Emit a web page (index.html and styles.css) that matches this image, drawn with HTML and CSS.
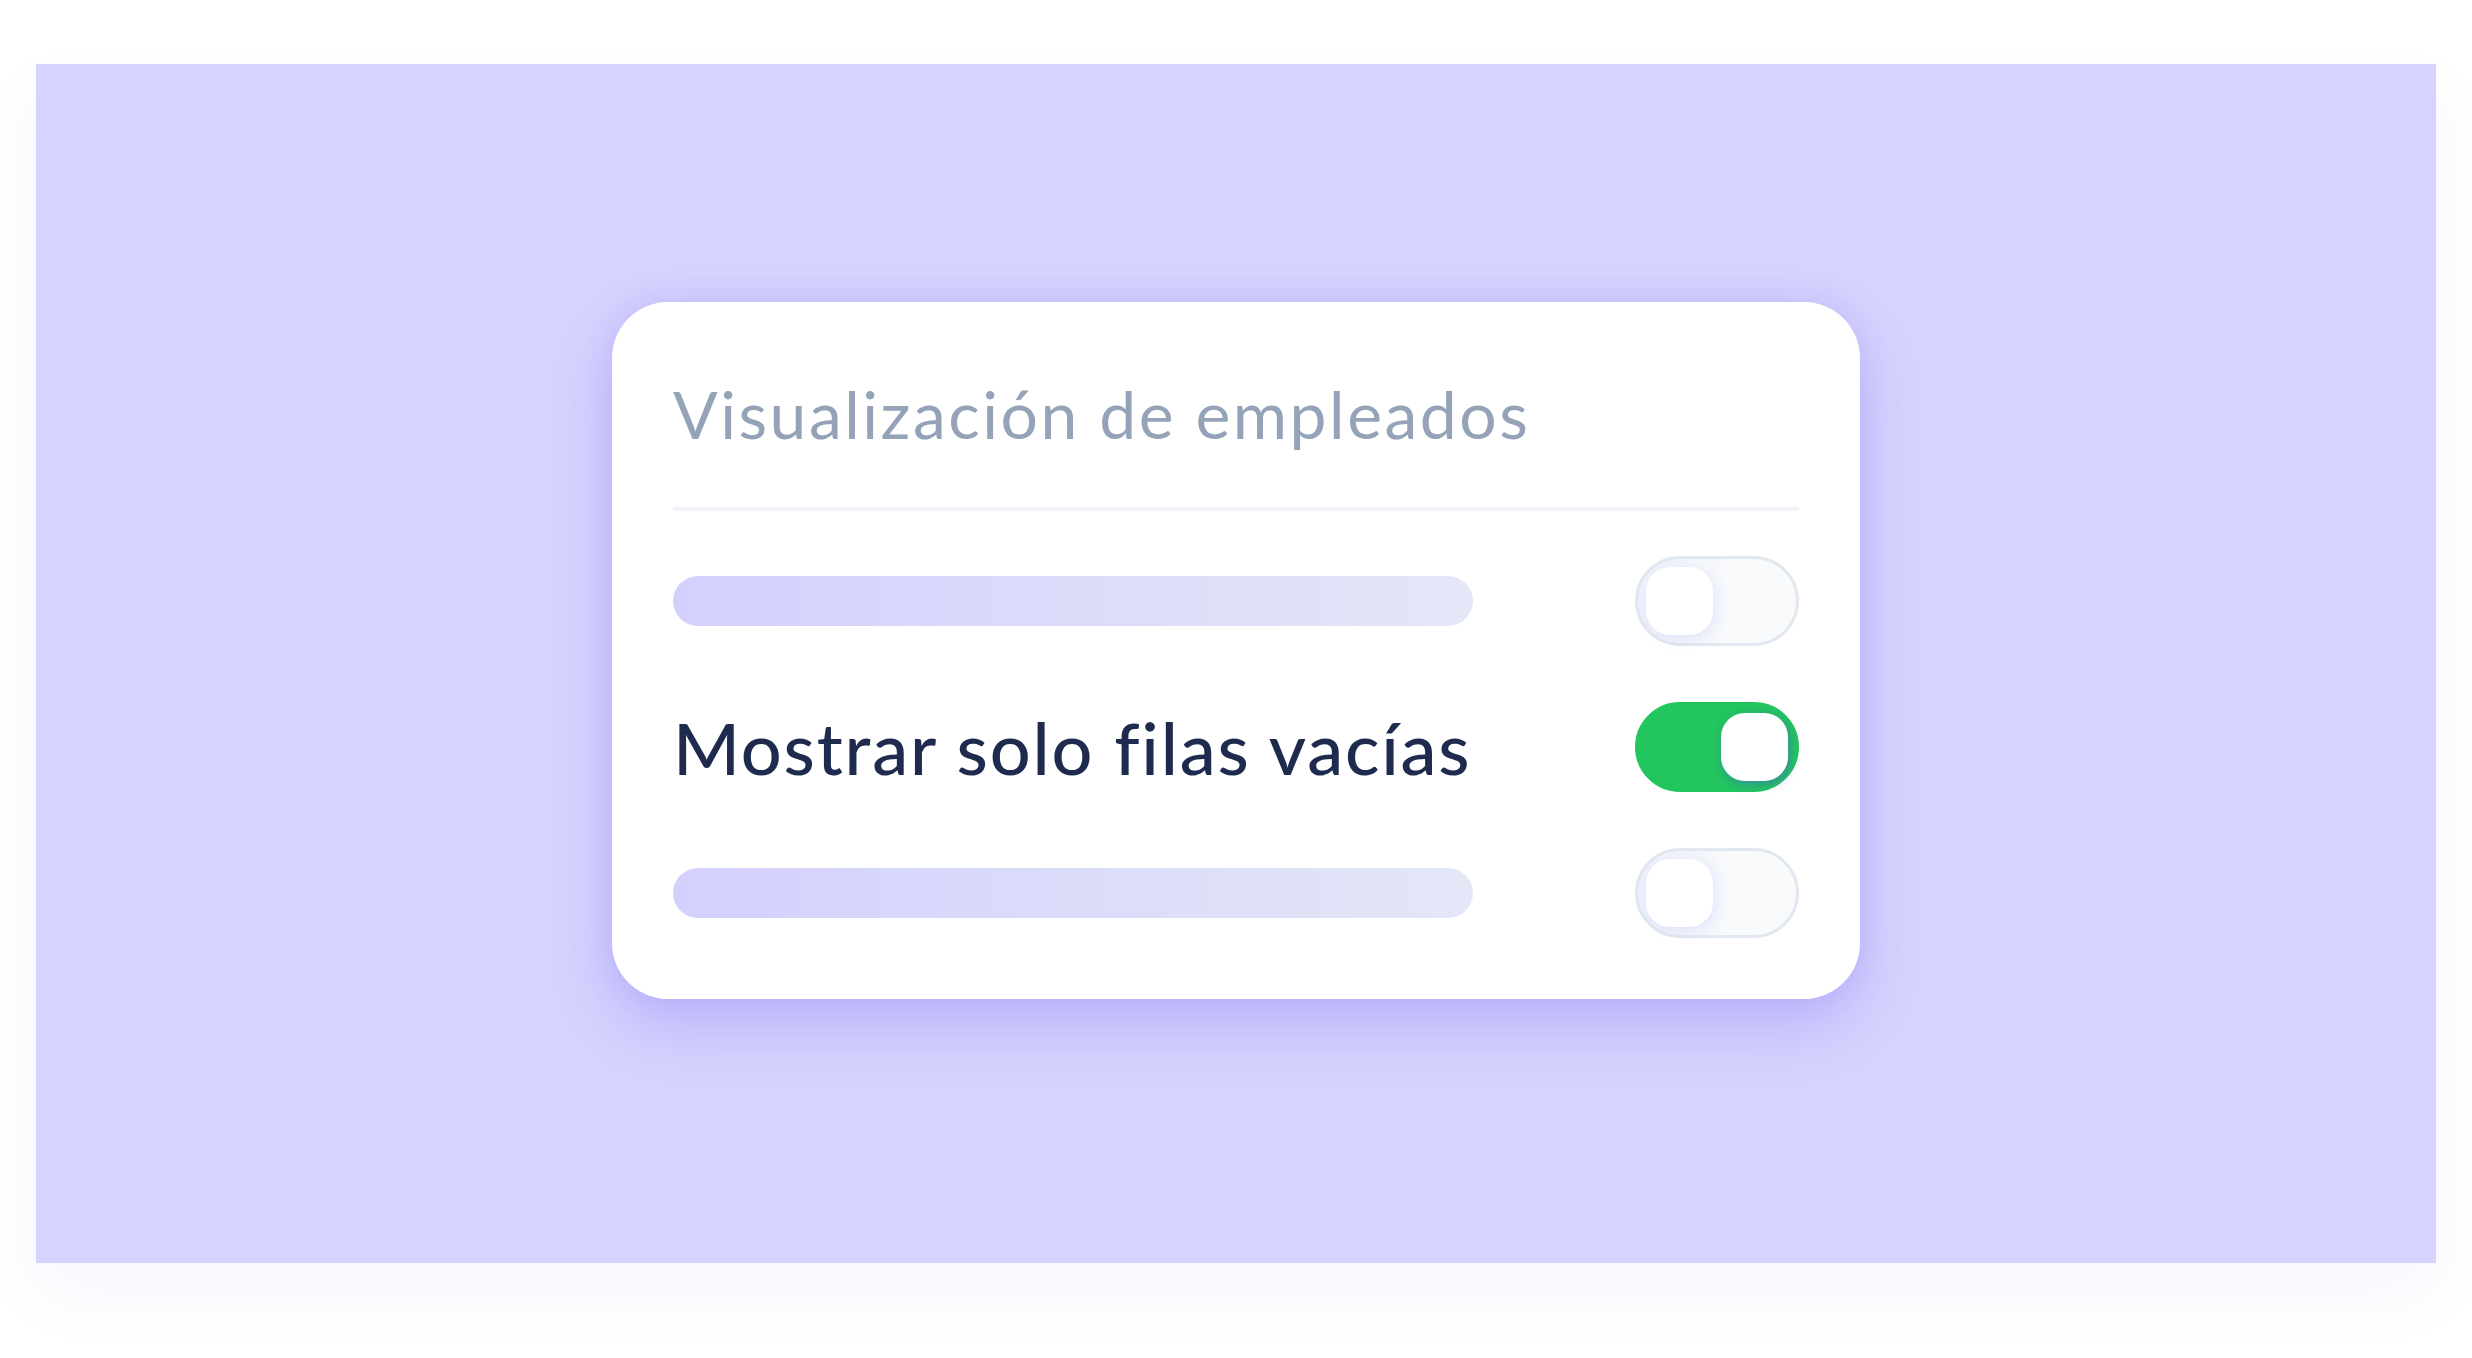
FILE: index.html
```html
<!DOCTYPE html>
<html lang="es">
<head>
    <meta charset="UTF-8">
    <meta name="viewport" content="width=device-width, initial-scale=1.0">
    <title>Visualización de empleados</title>
    <link rel="stylesheet" href="styles.css">
</head>
<body>
    <div class="stage">
        <!-- Settings card -->
        <div class="card">
            <h2 class="card-title">Visualización de empleados</h2>
            <div class="divider"></div>

            <div class="options">
                <div class="option">
                    <div class="placeholder"></div>
                    <div class="toggle"><span class="knob"></span></div>
                </div>

                <div class="option">
                    <span class="label">Mostrar solo filas vacías</span>
                    <div class="toggle on"><span class="knob"></span></div>
                </div>

                <div class="option">
                    <div class="placeholder"></div>
                    <div class="toggle"><span class="knob"></span></div>
                </div>
            </div>
        </div>
    </div>
</body>
</html>
```

FILE: styles.css
```css
/* Global styles */
* {
    box-sizing: border-box;
}

body {
    margin: 0;
    padding: 64px 36px 95px;
    min-height: 100vh;
    display: flex;
    background-color: #fff;
    font-family: Lato, 'Noto Sans', sans-serif;
    font-variant-ligatures: none;
}

.stage {
    flex: 1;
    display: flex;
    justify-content: center;
    align-items: center;
    padding-bottom: 27px;
    background-color: #d6d3fe;
    box-shadow: 0 30px 60px rgba(99, 102, 241, 0.06);
}

/* Card */
.card {
    width: 1248px;
    padding: 72px 61px 61px;
    background-color: #fff;
    border-radius: 56px;
    box-shadow: 0 26px 60px rgba(88, 78, 235, 0.22), 0 0 30px rgba(88, 78, 235, 0.1);
}

.card-title {
    margin: 0;
    font-size: 66px;
    line-height: 80px;
    font-weight: 400;
    letter-spacing: 2.5px;
    color: #94a3b8;
}

.divider {
    height: 4px;
    margin-top: 53px;
    background-color: #f1f5f9;
}

.options {
    display: flex;
    flex-direction: column;
    gap: 56px;
    margin-top: 45px;
}

.option {
    display: flex;
    justify-content: space-between;
    align-items: center;
    height: 90px;
}

.placeholder {
    width: 800px;
    height: 50px;
    border-radius: 25px;
    background: linear-gradient(90deg, #d3d0fe, #e3e7f6);
}

.label {
    font-size: 72px;
    font-weight: 500;
    letter-spacing: 1.8px;
    color: #1e2b4f;
}

/* Toggle switch */
.toggle {
    width: 164px;
    height: 90px;
    padding: 8px;
    border: 3px solid #e2e8f0;
    border-radius: 45px;
    background: linear-gradient(90deg, #eef0fb, #f8fafc 60%);
    display: flex;
}

.knob {
    width: 67px;
    height: 68px;
    border-radius: 24px;
    background-color: #fff;
    box-shadow: 3px 3px 14px rgba(99, 102, 241, 0.12);
}

.toggle.on {
    border-color: #22c55e;
    background: #22c55e;
    justify-content: flex-end;
}

.toggle.on .knob {
    box-shadow: 2px 3px 10px rgba(79, 70, 229, 0.45);
}
```
